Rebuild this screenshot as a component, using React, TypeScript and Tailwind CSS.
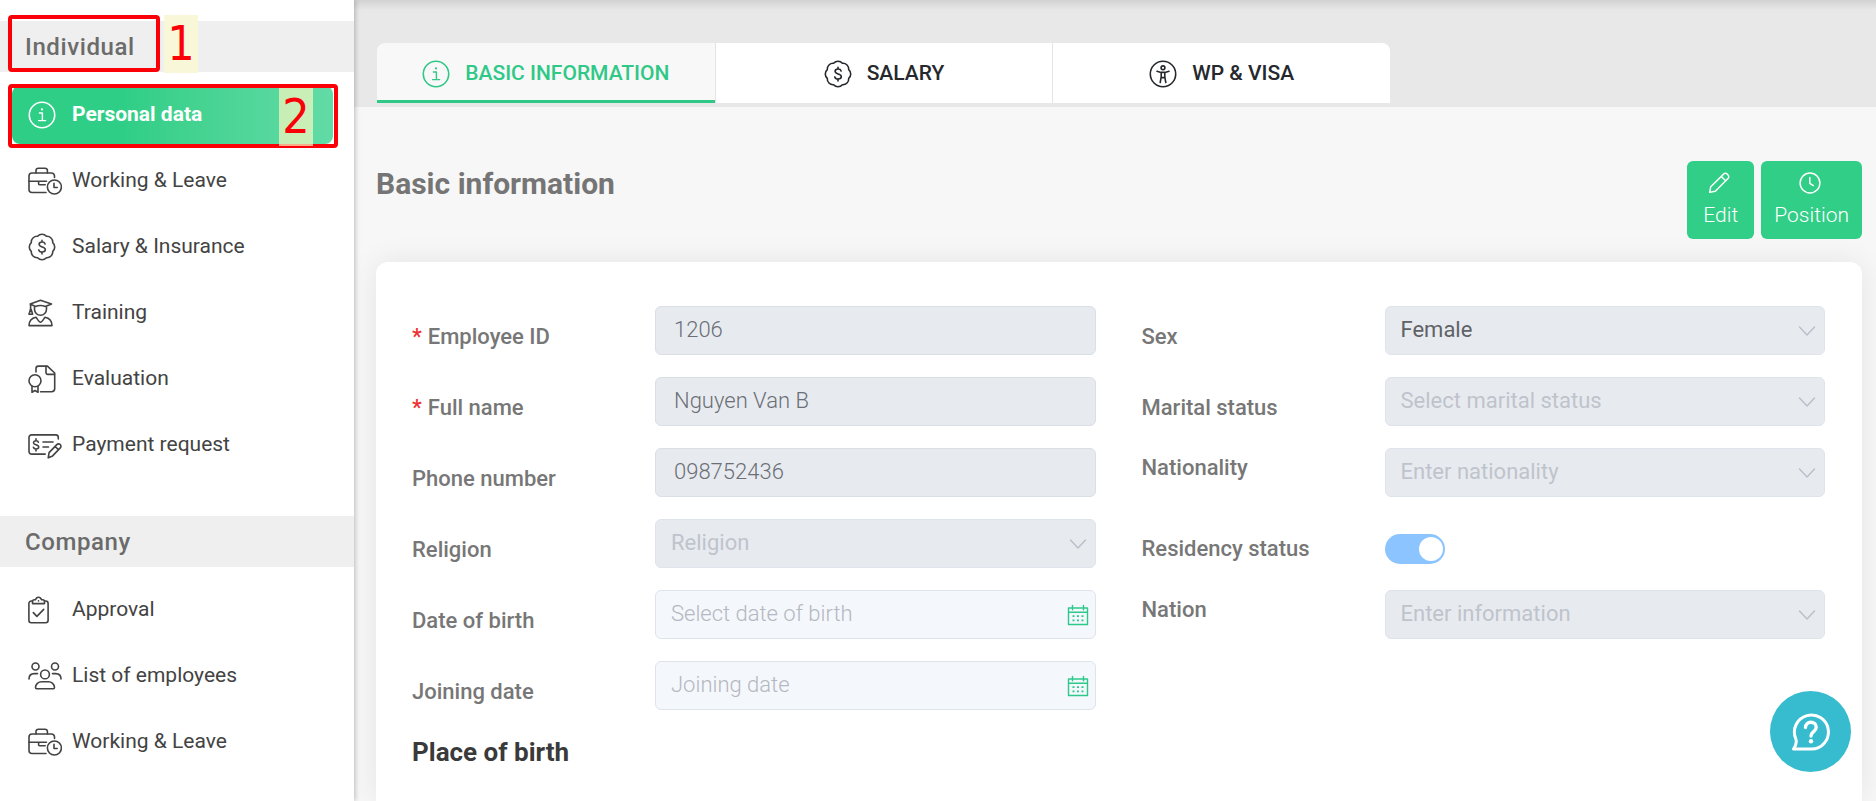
import type { ReactNode } from "react";

type IconProps = { className?: string };

function Svg({ w, h, children, className = "" }: { w: number; h: number; children: ReactNode; className?: string }) {
  return (
    <svg
      width={w}
      height={h}
      viewBox={`0 0 ${w} ${h}`}
      fill="none"
      stroke="currentColor"
      strokeWidth={1.6}
      strokeLinecap="round"
      strokeLinejoin="round"
      aria-hidden="true"
      className={`shrink-0 ${className}`}
    >
      {children}
    </svg>
  );
}

function InfoIcon({ className }: IconProps) {
  return (
    <Svg w={28} h={28} className={className}>
      <circle cx="14" cy="14" r="12.7" />
      <path d="M11.4 12h3v7.4M10.6 19.6h7" strokeWidth={1.4} />
      <circle cx="14" cy="8.4" r="1.1" fill="currentColor" stroke="none" />
    </Svg>
  );
}

function DollarBadgeIcon({ className }: IconProps) {
  return (
    <Svg w={28} h={28} className={className}>
      <path d="M9.600 3.300A5.800 5.800 0 0 1 18.400 3.300A5.800 5.800 0 0 1 24.700 9.600A5.800 5.800 0 0 1 24.700 18.400A5.800 5.800 0 0 1 18.400 24.700A5.800 5.800 0 0 1 9.600 24.700A5.800 5.800 0 0 1 3.300 18.400A5.800 5.800 0 0 1 3.300 9.600A5.800 5.800 0 0 1 9.600 3.300z" />
      <path d="M17.100 10.900c-.4-1.200-1.500-1.900-3-1.900-1.700 0-3 .9-3 2.300 0 1.500 1.300 2.100 3 2.600 1.800.5 3.200 1.100 3.200 2.700 0 1.500-1.400 2.400-3.200 2.400-1.700 0-2.900-.8-3.300-2.100M14 7.300V9M14 19v1.900" />
    </Svg>
  );
}

function AccessibilityIcon({ className }: IconProps) {
  return (
    <Svg w={28} h={28} className={className}>
      <circle cx="14" cy="14" r="12.7" />
      <circle cx="14" cy="7.800" r="1.9" />
      <path d="M8 11.300l4 1.100h4l4-1.100M12.200 12.500v4.300l-1 5.700M15.800 12.500v4.300l1 5.700M12.300 17.600h3.400" strokeWidth={1.6} />
    </Svg>
  );
}

function BriefcaseClockIcon({ className }: IconProps) {
  return (
    <Svg w={34} h={28} className={className}>
      <path d="M8 6V3.400A2.200 2.200 0 0 1 10.200 1.200h7A2.200 2.200 0 0 1 19.400 3.400V6" />
      <path d="M26.500 10.500V9a3 3 0 0 0-3-3H4a3 3 0 0 0-3 3v13.500a3 3 0 0 0 3 3h14" />
      <path d="M1 14.300h17.500M10.600 14.500v2.300a1 1 0 0 0 1 1h5.600" />
      <circle cx="26.400" cy="20" r="7" />
      <path d="M26 16.200v4.300h3.200" />
    </Svg>
  );
}

function GraduateIcon({ className }: IconProps) {
  return (
    <Svg w={25} h={28} className={className}>
      <path d="M2.200 5L12.500 1.200 23.500 5l-6.200 2.500c-2.800-1.100-7-1.100-9.800 0L2.200 5zM2.600 5.200v5.600" />
      <path d="M2.500 10.500L1 15.200h3.600L3.200 10.500z" />
      <path d="M6.500 8.200v2a6 6 0 0 0 12 0v-2" />
      <path d="M8 18.200c-3.800.7-6.900 3-7 8.400h23c-.1-5.400-3.200-7.700-7-8.400-1 1.200-3 5-4.500 5S9 19.400 8 18.200z" />
    </Svg>
  );
}

function CertificateIcon({ className }: IconProps) {
  return (
    <Svg w={28} h={28} className={className}>
      <path d="M8 7V3.500A2.400 2.400 0 0 1 10.400 1.100h9L26.700 8v15.500a3.200 3.200 0 0 1-3.200 3.200H12.500" />
      <path d="M18 1.400v6.400a1.600 1.600 0 0 0 1.600 1.600h6.800" />
      <circle cx="7" cy="15.800" r="6" />
      <path d="M4 21.300v6l3-1.800 3 1.800v-6" />
    </Svg>
  );
}

function ChequeIcon({ className }: IconProps) {
  return (
    <Svg w={34} h={28} className={className}>
      <path d="M30.300 8V6.500a2.600 2.600 0 0 0-2.600-2.600H3.600A2.600 2.600 0 0 0 1 6.500v14a2.600 2.600 0 0 0 2.600 2.600h13.600" />
      <path d="M10.400 11.300c-.3-1-1.200-1.500-2.400-1.500-1.500 0-2.500.8-2.500 1.900 0 1.300 1.100 1.700 2.500 2.100s2.700.9 2.700 2.200c0 1.200-1.100 2-2.700 2-1.300 0-2.300-.6-2.600-1.700M8 7.900v1.900M8 18v1.900" />
      <path d="M15 11h10M15 16h5.500" />
      <path d="M20.200 26.800l.9-5.200 7.700-8a2.400 2.400 0 0 1 3.400-.1c1 1 1 2.500.1 3.400l-7.700 8zM27 15.400l3.500 3.400" />
    </Svg>
  );
}

function ClipboardCheckIcon({ className }: IconProps) {
  return (
    <Svg w={21} h={28} className={className}>
      <path d="M4.500 5H3.300A2.400 2.400 0 0 0 .9 7.400v16.900a2.400 2.400 0 0 0 2.400 2.400h14.400a2.400 2.400 0 0 0 2.400-2.400V7.400A2.400 2.400 0 0 0 17.700 5h-1.200" />
      <path d="M4.500 7.600V5.400c0-1 .8-1.700 1.800-1.700h1.200C8 2.200 9 1.200 10.500 1.200s2.500 1 3 2.500h1.200c1 0 1.800.7 1.800 1.700v2.200z" />
      <path d="M10.500 4.800v.1M5.300 16.600l3.600 3.800 6.800-7" />
    </Svg>
  );
}

function PeopleIcon({ className }: IconProps) {
  return (
    <Svg w={34} h={28} className={className}>
      <circle cx="7.500" cy="4.500" r="3.500" />
      <circle cx="27" cy="4.500" r="3.500" />
      <circle cx="17" cy="12.400" r="4.400" />
      <path d="M1 17c0-3.400 2.300-5.400 5.300-5.400h3.200M33 17c0-3.400-2.300-5.400-5.300-5.400h-3.200" />
      <path d="M7.500 25.600c0-3.600 3-5.800 6-5.800h7c3 0 6 2.200 6 5.800 0 .7-.4 1.100-1.100 1.100H8.600c-.7 0-1.100-.4-1.100-1.100z" />
    </Svg>
  );
}

function PencilIcon({ className }: IconProps) {
  return (
    <Svg w={24} h={24} className={className}>
      <path d="M1.800 22.200L3 16 17 2.300a2.700 2.700 0 0 1 3.900 0l.9.900a2.700 2.700 0 0 1 0 3.900L8 21zM14.500 4.900l4.800 4.700" />
    </Svg>
  );
}

function ClockIcon({ className }: IconProps) {
  return (
    <Svg w={24} h={24} className={className}>
      <circle cx="12" cy="12" r="10.800" />
      <path d="M11.800 6v6.300l3.800 2.500" />
    </Svg>
  );
}

function CalendarIcon() {
  return (
    <Svg w={22} h={22} className="pointer-events-none absolute right-[7px] top-1/2 -translate-y-1/2 text-[#2dc98a]">
      <path d="M1.500 4h19v16.500h-19zM1.500 8.300h19" strokeWidth={1.4} />
      <path d="M5.500 1.500v4.300M16.500 1.500v4.300" strokeWidth={1.4} />
      <path d="M5.500 12.200h2M10 12.200h2M14.500 12.200h2M5.500 16.400h2M10 16.400h2M14.500 16.400h2" strokeWidth={1.7} strokeLinecap="butt" />
    </Svg>
  );
}

function ChevronIcon() {
  return (
    <Svg w={18} h={12} className="pointer-events-none absolute right-[9px] top-1/2 -translate-y-1/2 text-[#b9bec8]">
      <path d="M1.500 2L9 10l7.500-8" strokeWidth={1.4} />
    </Svg>
  );
}

function HelpIcon() {
  return (
    <Svg w={40} h={40}>
      <path d="M2.500 37h18a17 17 0 1 0-15.800-10.500C6 29.800 5 33.500 2.500 37z" strokeWidth={3} />
      <path d="M14.500 15.500c0-3.200 2.300-5.200 5.300-5.200s5.400 1.900 5.400 5c0 4.300-5.200 4.300-5.200 8.700" strokeWidth={3.4} />
      <circle cx="20" cy="29.300" r="2.200" fill="currentColor" stroke="none" />
    </Svg>
  );
}

type NavItem = { label: string; Icon: (p: IconProps) => ReactNode; active?: boolean };

const individualItems: NavItem[] = [
  { label: "Personal data", Icon: InfoIcon, active: true },
  { label: "Working & Leave", Icon: BriefcaseClockIcon },
  { label: "Salary & Insurance", Icon: DollarBadgeIcon },
  { label: "Training", Icon: GraduateIcon },
  { label: "Evaluation", Icon: CertificateIcon },
  { label: "Payment request", Icon: ChequeIcon },
];

const companyItems: NavItem[] = [
  { label: "Approval", Icon: ClipboardCheckIcon },
  { label: "List of employees", Icon: PeopleIcon },
  { label: "Working & Leave", Icon: BriefcaseClockIcon },
];

function NavSection({ title, items, marked }: { title: string; items: NavItem[]; marked?: boolean }) {
  return (
    <section>
      <h2 className="relative flex h-[51px] items-center bg-[#efefef] pl-[25px] text-2xl font-medium tracking-wide text-[#6b6b6b]">
        {title}
        {marked && (
          <>
            <span className="absolute -top-1.5 left-2 h-[57px] w-[152px] rounded-sm border-4 border-[#fb0007]" />
            <Marker text="1" className="-top-1.5 left-[164px] bg-[#f8f8d8]" />
          </>
        )}
      </h2>
      <ul className="flex flex-col gap-2 pt-3.5">
        {items.map(({ label, Icon, active }) => (
          <li key={label} className="relative pl-3 pr-[21px]">
            <a
              href="#"
              className={
                active
                  ? "flex h-[58px] items-center rounded-lg bg-linear-to-r from-[#2fce86] from-35% to-[#62dba6] pl-4 text-[21px] font-bold text-white"
                  : "flex h-[58px] items-center rounded-lg pl-4 text-[21px] text-[#434343]"
              }
            >
              <span className="w-11">
                <Icon />
              </span>
              <span>{label}</span>
            </a>
            {active && (
              <>
                <span className="absolute -top-0.5 left-2 h-16 w-[330px] rounded-sm border-4 border-[#fb0007]" />
                <Marker text="2" className="top-0.5 left-[279px] bg-[#f8f8c0]/70" />
              </>
            )}
          </li>
        ))}
      </ul>
    </section>
  );
}

function Marker({ text, className }: { text: string; className: string }) {
  return (
    <span
      className={`absolute flex h-[58px] w-[34px] items-center justify-center pb-0.5 font-['DejaVu_Sans_Condensed','DejaVu_Sans',sans-serif] text-5xl font-normal tracking-normal text-[#fb0007] ${className}`}
    >
      {text}
    </span>
  );
}

const tabs = [
  { label: "BASIC INFORMATION", Icon: InfoIcon, active: true },
  { label: "SALARY", Icon: DollarBadgeIcon },
  { label: "WP & VISA", Icon: AccessibilityIcon },
];

type FieldDef = {
  id: string;
  label: string;
  kind: "text" | "select" | "date" | "switch";
  value?: string;
  placeholder?: string;
  required?: boolean;
  labelClass?: string;
};

const leftFields: FieldDef[] = [
  { id: "employee-id", label: "Employee ID", kind: "text", value: "1206", required: true },
  { id: "full-name", label: "Full name", kind: "text", value: "Nguyen Van B", required: true },
  { id: "phone", label: "Phone number", kind: "text", value: "098752436" },
  { id: "religion", label: "Religion", kind: "select", placeholder: "Religion" },
  { id: "dob", label: "Date of birth", kind: "date", placeholder: "Select date of birth" },
  { id: "joining", label: "Joining date", kind: "date", placeholder: "Joining date" },
];

const rightFields: FieldDef[] = [
  { id: "sex", label: "Sex", kind: "select", value: "Female" },
  { id: "marital", label: "Marital status", kind: "select", placeholder: "Select marital status" },
  { id: "nationality", label: "Nationality", kind: "select", placeholder: "Enter nationality", labelClass: "pb-2.5" },
  { id: "residency", label: "Residency status", kind: "switch", labelClass: "pt-2.5" },
  { id: "nation", label: "Nation", kind: "select", placeholder: "Enter information", labelClass: "pb-2.5" },
];

function Control({ field }: { field: FieldDef }) {
  if (field.kind === "switch") {
    return (
      <span className="flex pt-2.5">
        <input
          id={field.id}
          type="checkbox"
          role="switch"
          defaultChecked
          className="h-[30px] w-[60px] appearance-none rounded-full bg-[#8cc4ff] before:block before:size-6 before:translate-x-[34px] before:translate-y-[3px] before:rounded-full before:bg-white"
        />
      </span>
    );
  }
  if (field.kind === "select") {
    return (
      <span className="relative block">
        <select
          id={field.id}
          disabled
          className={`h-[49px] w-full appearance-none rounded-md border border-[#dfe4ec] bg-[#e7ebf0] px-[15px] pb-0.5 text-[22px] opacity-100 ${
            field.value ? "text-[#606266]" : "text-[#bfc3cb]"
          }`}
        >
          <option>{field.value ?? field.placeholder}</option>
        </select>
        <ChevronIcon />
      </span>
    );
  }
  if (field.kind === "date") {
    return (
      <span className="relative block">
        <input
          id={field.id}
          type="text"
          placeholder={field.placeholder}
          className="h-[49px] w-full rounded-md border border-[#dfe4ec] bg-[#f4f7fc] px-[15px] pb-0.5 text-[22px] font-light placeholder:text-[#b4b8c0]"
        />
        <CalendarIcon />
      </span>
    );
  }
  return (
    <input
      id={field.id}
      type="text"
      disabled
      defaultValue={field.value}
      className="h-[49px] w-full rounded-md border border-[#dadfe6] bg-[#e7ebf0] px-[18px] pb-0.5 text-[22px] font-light text-[#6b6f75]"
    />
  );
}

function FieldColumn({ fields }: { fields: FieldDef[] }) {
  return (
    <div className="flex flex-col gap-[22px]">
      {fields.map((f) => (
        <div key={f.id} className="grid h-[49px] grid-cols-[243px_minmax(0,1fr)] items-center">
          <label htmlFor={f.id} className={`text-[22px] font-medium text-[#777777] ${f.labelClass ?? "pt-3"}`}>
            {f.required && <span className="pr-1.5 text-[#ee3030]">*</span>}
            {f.label}
          </label>
          <Control field={f} />
        </div>
      ))}
    </div>
  );
}

const actions = [
  { label: "Edit", Icon: PencilIcon },
  { label: "Position", Icon: ClockIcon },
];

export default function App() {
  return (
    <div className="flex min-h-screen bg-[#f7f7f7] font-[Roboto,sans-serif]">
      <nav className="z-10 w-[354px] shrink-0 bg-white pt-[21px] shadow-[1px_0_5px_rgba(0,0,0,0.25)]">
        <div className="flex flex-col gap-[42px]">
          <NavSection title="Individual" items={individualItems} marked />
          <NavSection title="Company" items={companyItems} />
        </div>
      </nav>

      <main className="flex min-w-0 flex-1 flex-col">
        <header className="bg-[#e8e8e8] bg-linear-to-b from-[#d2d2d2] to-[#e8e8e8] to-[10px] pb-1 pl-[23px] pt-[43px]">
          <div role="tablist" className="grid w-full max-w-[1013px] grid-cols-3 overflow-hidden rounded-t-lg">
            {tabs.map(({ label, Icon, active }) => (
              <button
                key={label}
                type="button"
                role="tab"
                aria-selected={!!active}
                className={
                  active
                    ? "flex h-[60px] items-center justify-center gap-[15px] border-b-3 border-[#2fc887] bg-[#f8f8f8] pt-1 text-[21px] font-medium text-[#2fc887]"
                    : "flex h-[60px] items-center justify-center gap-[15px] border-l border-[#e4e4e4] bg-white pt-px text-[21px] font-medium text-[#25282c]"
                }
              >
                <Icon />
                {label}
              </button>
            ))}
          </div>
        </header>

        <div className="flex flex-1 flex-col pl-[22px] pr-3.5 pt-[54px]">
          <div className="flex h-[78px] justify-between">
            <h1 className="pt-[5px] text-3xl leading-9 font-bold text-[#757575]">Basic information</h1>
            <div className="flex gap-[7px]">
              {actions.map(({ label, Icon }) => (
                <button
                  key={label}
                  type="button"
                  className="flex min-w-[67px] flex-col items-center gap-1.5 rounded-md bg-[#30ce86] px-[13px] pt-[11px] text-[21px] font-light text-white"
                >
                  <Icon className="mr-1 size-[22px]" />
                  {label}
                </button>
              ))}
            </div>
          </div>

          <form className="mt-[23px] flex-1 rounded-t-xl bg-white pl-9 pr-[37px] pt-11 shadow-[0_0_30px_rgba(0,0,0,0.08)]">
            <div className="grid grid-cols-2 gap-x-[46px]">
              <FieldColumn fields={leftFields} />
              <FieldColumn fields={rightFields} />
            </div>
            <h2 className="pt-[23px] text-[26px] font-bold text-[#3a3a3a]">Place of birth</h2>
          </form>
        </div>
      </main>

      <button
        type="button"
        aria-label="Help"
        className="fixed bottom-[29px] right-[25px] z-20 flex size-[81px] items-center justify-center rounded-full bg-[#37bccf] text-white"
      >
        <HelpIcon />
      </button>
    </div>
  );
}
